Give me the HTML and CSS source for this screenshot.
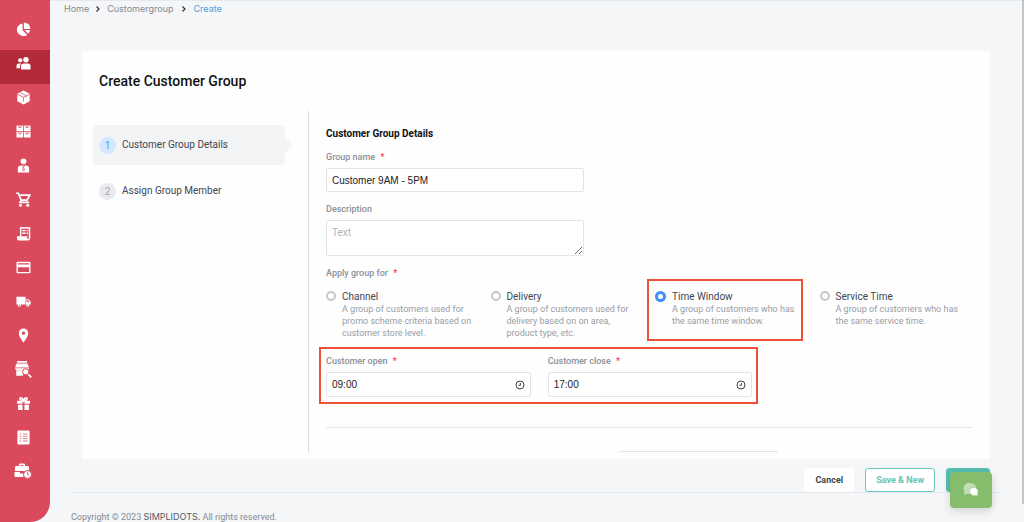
FILE: index.html
```html
<!DOCTYPE html>
<html lang="en">
<head>
<meta charset="utf-8">
<meta name="viewport" content="width=device-width, initial-scale=1">
<title>Create Customer Group</title>
<link rel="stylesheet" href="styles.css">
</head>
<body>
<div class="app">
  <nav class="sidebar" aria-label="Main">
    <a class="nav-item" href="#" aria-label="Dashboard"><svg class="icon" viewBox="0 0 16 16"><path d="M7 1.500v7.300l5 5A7 6.800 0 1 1 7 1.500z"/><path d="M8.400.500A6.800 6.800 0 0 1 15.300 7.400H8.400z"/><path d="M9.200 8.600h5.800a6.500 6.500 0 0 1-2.100 4z"/></svg></a>
    <a class="nav-item active" href="#" aria-label="Customers"><svg class="icon" viewBox="0 0 16 16"><circle cx="4.500" cy="4.600" r="2.300"/><circle cx="10.600" cy="4" r="2.900"/><path d="M.500 13V10.400Q.500 8 3 8H5.300Q4.400 9 4.400 10.500V13z"/><path d="M5.400 14.300V10.800Q5.400 8 8 8H12.600Q15.500 8 15.500 10.800V14.300z"/></svg></a>
    <a class="nav-item" href="#" aria-label="Products"><svg class="icon" viewBox="0 0 16 16"><path d="M8 .500l6.600 3.400v8L8 15.500l-6.600-3.600v-8z"/><path class="cut" d="M1.700 4.500L8 7.800l6.300-3.300M8 7.800V12.500M4.800 2.800l6 3.200v2"/></svg></a>
    <a class="nav-item" href="#" aria-label="Inventory"><svg class="icon" viewBox="0 0 16 16"><path d="M.500 1.500h7.100v6.100H.500zM8.400 1.500h7.100v6.100H8.400zM.500 8.400h7.100v6.100H.500zM8.400 8.400h7.100v6.100H8.400z"/><path class="cut" d="M3 1.500v2.200h2.400V1.500M10.600 1.500v2.200H13V1.500M3 8.400v2.200h2.400V8.400M10.600 8.400v2.200H13V8.400"/></svg></a>
    <a class="nav-item" href="#" aria-label="Employees"><svg class="icon" viewBox="0 0 16 16"><circle cx="8" cy="3.500" r="3.100"/><path d="M2 15.500v-4Q2 8 5.600 8h4.800Q14 8 14 11.500v4z"/><path class="cut" d="M6.500 8l1.500 1.800L9.500 8M8 9.800l-1 3 1 1.200 1-1.200z"/></svg></a>
    <a class="nav-item" href="#" aria-label="Sales"><svg class="icon" viewBox="0 0 16 16"><path class="line" d="M0 1.300h2.500l3 7.400h6.400l2.800-5.400H3.500M5.500 8.700L4.200 11.100h9.800"/><circle cx="4.800" cy="14" r="1.600"/><circle cx="12.500" cy="14" r="1.600"/></svg></a>
    <a class="nav-item" href="#" aria-label="Invoices"><svg class="icon" viewBox="0 0 16 16"><path fill-rule="evenodd" d="M4.200.700l1 .8 1-.8 1 .8 1-.8 1 .8 1-.8 1 .8 1-.8 1 .8 1-.8 1 .8v11.500Q15.200 15.500 12.500 15.500H3.300Q1 15.500 1 13.200v-2.400H4.200zM5.700 2.800v8H12v2.400q.8 1.200 1.600 0V2.800z"/><path d="M6.600 4.300h3.700v1.400H6.600zM11.300 4.300h1.500v1.400h-1.500zM6.600 7h3.700v1.400H6.600zM11.300 7h1.500v1.400h-1.500z"/></svg></a>
    <a class="nav-item" href="#" aria-label="Payments"><svg class="icon" viewBox="0 0 16 16"><path fill-rule="evenodd" d="M1.800 1.800h12.400q1.300 0 1.300 1.300v9.800q0 1.300-1.300 1.300H1.800Q.500 14.200.500 12.900V3.100Q.500 1.800 1.800 1.800zM2 3.400v1.500h12V3.400zM2 7.600v5.100h12V7.600z"/></svg></a>
    <a class="nav-item" href="#" aria-label="Delivery"><svg class="icon" viewBox="0 0 16 16"><path d="M.500 2.800h9.700v8.400H.500zM10.600 5.600h2.900l2.200 2.700v2.900h-5.100z"/><path class="cut" d="M11.500 6.800h1.500l1 1.500h-2.500z"/><circle cx="3.600" cy="11.800" r="1.800"/><circle cx="12.600" cy="11.800" r="1.800"/><circle class="hole" cx="3.600" cy="11.800" r=".7"/><circle class="hole" cx="12.600" cy="11.800" r=".7"/></svg></a>
    <a class="nav-item" href="#" aria-label="Locations"><svg class="icon" viewBox="0 0 16 16"><path fill-rule="evenodd" d="M8 .500a5 5 0 0 1 5 5C13 9.200 8 15.500 8 15.500S3 9.200 3 5.500a5 5 0 0 1 5-5zm0 3.200a1.800 1.800 0 1 0 0 3.600A1.800 1.800 0 0 0 8 3.700z"/></svg></a>
    <a class="nav-item" href="#" aria-label="Store search"><svg class="icon icon-wide" viewBox="0 0 18 18"><path d="M3 1h10v1.700H3zM2.500 3.600h11L15 7.500H1zM1 8.200h14v.600q-.500 1.400-2 1.400H3Q1.500 10.200 1 8.800zM2.200 10.600H9v5.200H2.200z"/><circle class="lens" cx="11.700" cy="11.800" r="3.100"/><path class="line" d="M14.300 14.300l3 3"/></svg></a>
    <a class="nav-item" href="#" aria-label="Promotions"><svg class="icon" viewBox="0 0 16 16"><path d="M1.200 5H7v3.300H1.200zM9 5h5.800v3.300H9zM2.200 9.300H7V15H2.200zM9 9.300h4.800V15H9z"/><path class="line" d="M7.600 4.700C3.400 4.700 3.400 1.600 5.500 1.800 7 2 7.600 3.500 8 4.700 8.400 3.500 9 2 10.500 1.800c2.100-.2 2.100 2.900-2.100 2.900"/></svg></a>
    <a class="nav-item" href="#" aria-label="Reports"><svg class="icon" viewBox="0 0 16 16"><rect x="1.500" y=".5" width="13" height="15" rx="1"/><path class="cut" d="M4 4.300h1.600M7.500 4.300h4.700M4 6.800h1.600M7.500 6.800h4.700M4 9.200h1.600M7.500 9.200h4.700M4 11.700h1.600M7.500 11.700h4.700"/></svg></a>
    <a class="nav-item" href="#" aria-label="Work hours"><svg class="icon icon-wide" viewBox="0 0 18 18"><path fill-rule="evenodd" d="M5 4V2.800Q5 1.500 6.300 1.500h3.400Q11 1.500 11 2.800V4h2.600Q15 4 15 5.400V9H1V5.400Q1 4 2.400 4zm1.600 0h2.800V3H6.600zM.500 10H6v1.500h3.500V15H1.500Q.500 15 .500 14z"/><circle class="lens" cx="13.500" cy="12.500" r="4"/><path class="cut" d="M13.500 10.300v2.400h2"/></svg></a>
  </nav>

  <main class="main">
    <nav class="breadcrumb" aria-label="Breadcrumb">
      <a href="#">Home</a>
      <svg class="chevron" viewBox="0 0 6 6"><path d="M1.500.500L4 3 1.500 5.500"/></svg>
      <a href="#">Customergroup</a>
      <svg class="chevron chevron-last" viewBox="0 0 6 6"><path d="M1.500.500L4 3 1.500 5.500"/></svg>
      <a href="#" class="current" aria-current="page">Create</a>
    </nav>

    <section class="card">
      <h1 class="card-title">Create Customer Group</h1>
      <div class="wizard">
        <ol class="steps">
          <li><a class="step selected" href="#"><span class="step-no">1</span>Customer Group Details</a></li>
          <li><a class="step" href="#"><span class="step-no">2</span>Assign Group Member</a></li>
        </ol>

        <form class="form">
          <h2 class="form-title">Customer Group Details</h2>
          <div class="field">
            <label class="label" for="name">Group name <span class="req">*</span></label>
            <input class="input" id="name" type="text" value="Customer 9AM - 5PM">
          </div>
          <div class="field">
            <label class="label" for="desc">Description</label>
            <textarea class="input area" id="desc" placeholder="Text"></textarea>
          </div>
          <fieldset class="apply">
            <legend class="label">Apply group for <span class="req">*</span></legend>
            <div class="options">
              <label class="option"><input class="radio" type="radio" name="apply"><span class="option-text"><span class="option-name">Channel</span><span class="option-desc">A group of customers used for promo scheme criteria based on customer store level.</span></span></label>
              <label class="option"><input class="radio" type="radio" name="apply"><span class="option-text"><span class="option-name">Delivery</span><span class="option-desc">A group of customers used for delivery based on on area, product type, etc.</span></span></label>
              <label class="option marked"><input class="radio" type="radio" name="apply" checked><span class="option-text"><span class="option-name">Time Window</span><span class="option-desc">A group of customers who has the same time window.</span></span></label>
              <label class="option"><input class="radio" type="radio" name="apply"><span class="option-text"><span class="option-name">Service Time</span><span class="option-desc">A group of customers who has the same service time.</span></span></label>
            </div>
          </fieldset>
          <div class="times marked">
            <div class="time">
              <label class="label" for="open">Customer open <span class="req">*</span></label>
              <div class="time-box"><input id="open" type="text" value="09:00"><svg class="clock" viewBox="0 0 10 10"><circle cx="5" cy="5" r="4"/><path d="M5.400 3v2.300H3.400"/></svg></div>
            </div>
            <div class="time">
              <label class="label" for="close">Customer close <span class="req">*</span></label>
              <div class="time-box"><input id="close" type="text" value="17:00"><svg class="clock" viewBox="0 0 10 10"><circle cx="5" cy="5" r="4"/><path d="M5.400 3v2.300H3.400"/></svg></div>
            </div>
          </div>
          <hr class="rule">
          <input class="input search" type="text" aria-label="Search">
        </form>
      </div>
    </section>

    <div class="actions">
      <button class="btn" type="button">Cancel</button>
      <button class="btn outline" type="button">Save &amp; New</button>
      <button class="btn primary" type="button" aria-label="Save"></button>
    </div>
    <footer class="footer">Copyright © 2023 <span class="brand">SIMPLIDOTS.</span> All rights reserved.</footer>
  </main>
</div>
<button class="chat" type="button" aria-label="Chat"><svg viewBox="0 0 16 14"><path class="back" d="M7 0a6.500 5.500 0 0 1 6.500 5.500A6.500 5.500 0 0 1 7 11Q5.500 11 4.500 10.600L.700 12 1.500 8.500A5.500 5.500 0 0 1 7 0z"/><path class="front" d="M10.300 4.300a4.700 4.200 0 0 1 4.300 6l.6 2.500-2.500-.4A4.700 4.200 0 1 1 10.300 4.300z"/></svg></button>
<div class="scroll-thumb"></div>
</body>
</html>
```

FILE: styles.css
```css
* { box-sizing: border-box; }

body {
  margin: 0;
  background: #f4f6f8;
  color: #3f4650;
  font-family: Roboto, "Liberation Sans", sans-serif;
  font-size: 10px;
  line-height: 12px;
}

a { color: inherit; text-decoration: none; }
button, input, textarea { font: inherit; color: inherit; }

.app { display: flex; height: 100vh; overflow: hidden; }

/* Sidebar */
.sidebar {
  flex: 0 0 50px;
  padding-top: 16px;
  background: #da4a5c;
  border-bottom-right-radius: 20px;
}
.nav-item {
  --back: #da4a5c;
  display: flex;
  align-items: center;
  justify-content: center;
  height: 34px;
  padding: 0 4px 8px 0;
}
.nav-item.active { --back: #b32b3a; background: var(--back); }
.icon { width: 15px; height: 15px; fill: #fff; }
.icon-wide { width: 18px; height: 18px; }
.icon .cut { fill: none; stroke: var(--back); stroke-width: 0.8; }
.icon .hole { fill: var(--back); }
.icon .line { fill: none; stroke: #fff; stroke-width: 1.7; }
.icon .lens { stroke: var(--back); stroke-width: 1; }

/* Main column */
.main {
  flex: 1;
  min-width: 0;
  display: flex;
  flex-direction: column;
  padding: 0 24px 0 21px;
  border-top: 1px solid #e6eaed;
}

.breadcrumb {
  display: flex;
  align-items: center;
  gap: 6px;
  height: 50px;
  margin-left: -7px;
  padding: 2px 0 36px;
  color: #858b92;
  font-family: Inter, sans-serif;
  font-size: 9px;
}
.breadcrumb .current { color: #4a9fe0; }
.chevron { width: 6px; height: 6px; fill: none; stroke: #333; stroke-width: 1.2; }
.chevron-last { margin-left: 2px; }

/* Card */
.card {
  flex: 1;
  min-height: 0;
  display: flex;
  flex-direction: column;
  margin: 0 10px 0 11px;
  padding-bottom: 6px;
  background: #fefefe;
  border-radius: 3px 3px 0 0;
}
.card-title {
  margin: 0;
  padding: 22px 17px;
  color: #111;
  font-size: 14px;
  font-weight: 500;
  line-height: 16px;
}
.wizard { flex: 1; min-height: 0; display: flex; overflow: hidden; }

.steps {
  flex: 0 0 227px;
  display: flex;
  flex-direction: column;
  gap: 6px;
  margin: 0;
  padding: 14px 23px 0 11px;
  list-style: none;
  border-right: 1px solid #d9dce1;
}
.step {
  position: relative;
  display: flex;
  align-items: center;
  gap: 6px;
  height: 40px;
  padding: 0 6px;
  border-radius: 4px;
  font-size: 10px;
}
.step.selected { background: #f3f4f6; }
.step.selected::after {
  content: "";
  position: absolute;
  left: 100%;
  top: 12px;
  border: 8px solid transparent;
  border-left-color: #f3f4f6;
  border-right-width: 0;
}
.step-no {
  width: 17px;
  height: 17px;
  border-radius: 50%;
  background: #e9eaee;
  color: #a3a8b0;
  line-height: 17px;
  text-align: center;
}
.selected .step-no { background: #d3e8fd; color: #4a9ff5; }

/* Form */
.form { flex: 1; min-width: 0; padding: 17px 18px 0 17px; }
.form-title {
  margin: 0 0 11px;
  color: #111;
  font-size: 10px;
  font-weight: 700;
  line-height: 12px;
}
.field { width: 40%; margin-bottom: 11px; }
.label {
  display: block;
  margin-bottom: 5px;
  padding: 0;
  color: #8b919b;
  font-size: 9px;
  font-weight: 500;
}
.req { margin-left: 3px; color: #ee3b4a; }
.input {
  display: block;
  width: 100%;
  height: 24px;
  padding: 0 5px;
  background: #fff;
  border: 1px solid #e2e4e8;
  border-radius: 2px;
  color: #222;
  font-family: "Liberation Sans", Arial, sans-serif;
  font-size: 10px;
}
.area { height: 36px; padding-top: 6px; font-family: Roboto, sans-serif; resize: vertical; }
.area::placeholder { color: #b0b3b8; }

.apply { margin: 0; padding: 0; border: 0; }
.options {
  display: grid;
  grid-template-columns: repeat(4, 1fr);
  gap: 12px;
  padding-top: 6px;
}
.option { position: relative; display: flex; align-items: flex-start; gap: 6px; }
.radio {
  appearance: none;
  flex: none;
  width: 10px;
  height: 10px;
  margin: 1px 0;
  border: 2px solid #c3c7cd;
  border-radius: 50%;
  background: #fff;
}
.radio:checked { border: 3px solid #3f8ff7; width: 11px; height: 11px; }
.option-name { display: block; font-size: 10px; line-height: 13px; }
.option-desc { display: block; color: #989da5; font-size: 9px; line-height: 12px; }

/* Red call-out frames */
.marked { position: relative; }
.marked::after {
  content: "";
  position: absolute;
  inset: -8px -6px -7px -7px;
  border: 2px solid #ec5138;
  pointer-events: none;
}
.option.marked::after { inset: -11px 5px -2px -8px; }

.times {
  display: grid;
  grid-template-columns: 1fr 1fr;
  gap: 17px;
  width: 66%;
  margin-top: 16px;
}
.time-box {
  display: flex;
  align-items: center;
  height: 25px;
  padding: 0 5px;
  background: #fff;
  border: 1px solid #e2e4e8;
  border-radius: 2px;
}
.time-box input {
  flex: 1;
  min-width: 0;
  padding: 0;
  background: none;
  border: 0;
  color: #222;
  font-family: "Liberation Sans", Arial, sans-serif;
  font-size: 10px;
}
.clock { width: 10px; height: 10px; fill: none; stroke: #444; }
.rule { margin: 30px 0 23px; border: 0; border-top: 1px solid #e2e5e9; }
.search { width: 159px; margin-left: auto; margin-right: 30%; }

/* Bottom bar */
.actions {
  display: flex;
  justify-content: flex-end;
  gap: 11px;
  padding: 9px 10px 0 0;
  border-bottom: 1px solid #e3e6ea;
}
.btn {
  min-width: 44px;
  height: 24px;
  padding: 0 10px;
  background: #fff;
  border: 1px solid #fff;
  border-radius: 3px;
  font-size: 9px;
  font-weight: 700;
}
.btn.outline { border-color: #6fcbbd; color: #63c5b6; }
.btn.primary { background: #57bfb0; border-color: #57bfb0; }
.footer { padding-top: 18px; height: 29px; color: #858b92; font-size: 9px; line-height: 12px; }
.brand { color: #555b63; font-family: Inter, sans-serif; }

.chat {
  position: fixed;
  right: 32px;
  bottom: 14px;
  display: grid;
  place-items: center;
  width: 42px;
  height: 36px;
  padding: 0;
  background: #86bd6d;
  border: 0;
  border-radius: 4px;
  box-shadow: 0 3px 8px rgba(0, 0, 0, 0.15);
}
.chat svg { width: 16px; height: 14px; }
.chat .back { fill: #c3deb6; }
.chat .front { fill: #fff; stroke: #86bd6d; stroke-width: 0.5; }

.scroll-thumb {
  position: fixed;
  top: 0;
  right: 0;
  bottom: 18px;
  width: 2px;
  background: #c4c5c7;
}
```
